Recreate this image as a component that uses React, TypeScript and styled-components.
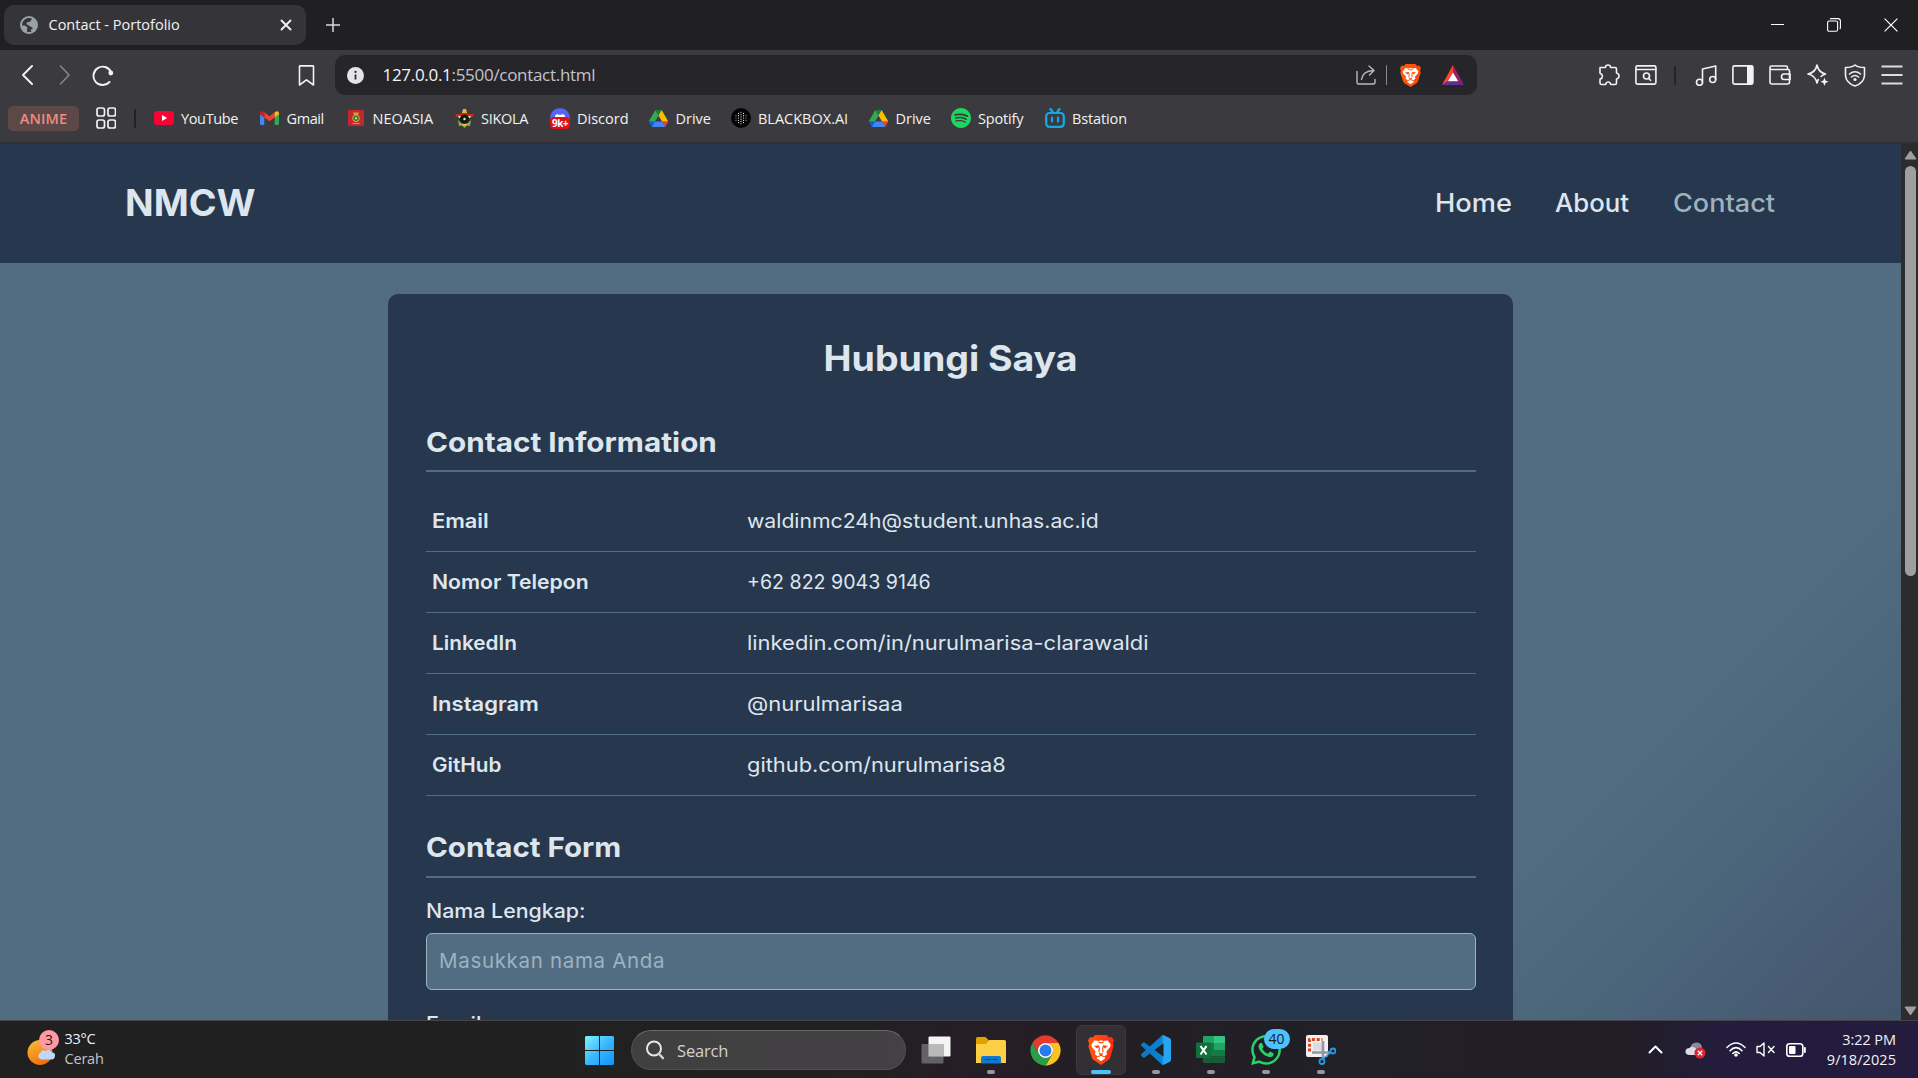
import React from "react";
import styled, { createGlobalStyle } from "styled-components";
import { SiSpotify, SiWhatsapp } from "react-icons/si";

const ui = `"Open Sans", "Noto Sans", sans-serif`;
const web = `Inter, "Open Sans", sans-serif`;

const Global = createGlobalStyle`
  * { box-sizing: border-box; }
  html, body { margin: 0; overflow: hidden; background: #202023; }
  svg { display: block; flex: none; }
`;

const Screen = styled.div`
  width: 1918px;
  height: 1078px;
  display: flex;
  flex-direction: column;
  overflow: hidden;
  font-family: ${ui};
  color: #f2f2f4;
`;

const T = styled.span<{ $ls?: number }>`
  letter-spacing: ${(p) => p.$ls ?? 0}px;
  white-space: nowrap;
`;

const Wide = styled.span<{ $x: number; $center?: boolean }>`
  display: inline-block;
  white-space: nowrap;
  transform: scaleX(${(p) => p.$x});
  transform-origin: ${(p) => (p.$center ? "center" : "left")};
`;

/* ---------- browser chrome ---------- */
const TabStrip = styled.header`
  height: 50px;
  flex: none;
  display: flex;
  justify-content: space-between;
  padding: 5px 20px 0 4px;
  background: #202023;
`;
const Tabs = styled.div`
  display: flex;
  gap: 20px;
  align-items: flex-start;
`;
const Tab = styled.div`
  width: 302px;
  height: 40px;
  border-radius: 10px;
  background: #353539;
  display: flex;
  align-items: center;
  padding: 0 14px 0 16px;
  font-size: 14.5px;
  ${T} { margin-left: 10.5px; flex: 1; padding-bottom: 2px; }
`;
const NewTab = styled.div`
  height: 40px;
  display: flex;
  align-items: center;
`;
const WindowButtons = styled.div`
  height: 39px;
  display: flex;
  align-items: center;
  gap: 43px;
`;
const Toolbar = styled.div`
  height: 50px;
  flex: none;
  display: flex;
  align-items: center;
  padding: 0 15px 0 20px;
  background: #3b3b3f;
`;
const NavButtons = styled.div`
  display: flex;
  align-items: center;
  gap: 19px;
  width: 278px;
`;
const BookmarkSlot = styled.div`
  width: 37px;
`;
const AddressBar = styled.div`
  width: 1142px;
  height: 40px;
  border-radius: 10px;
  background: #26262a;
  display: flex;
  align-items: center;
  padding: 0 13px 0 11.5px;
  gap: 19px;
`;
const Url = styled.div`
  flex: 1;
  font-size: 17px;
  color: #c3c3ca;
  padding-bottom: 1px;
  b { font-weight: 400; color: #f4f4f7; }
`;
const AddressActions = styled.div`
  display: flex;
  align-items: center;
`;
const BatSlot = styled.div`
  margin-left: 21px;
`;
const Rule = styled.i<{ $h: number; $w: number; $c: string; $m: string }>`
  width: ${(p) => p.$w}px;
  height: ${(p) => p.$h}px;
  margin: ${(p) => p.$m};
  background: ${(p) => p.$c};
  flex: none;
  border-radius: 1px;
`;
const Extensions = styled.div`
  display: flex;
  align-items: center;
  gap: 15.2px;
  margin-left: auto;
`;
const Bookmarks = styled.nav`
  height: 44px;
  flex: none;
  display: flex;
  align-items: center;
  padding: 0 0 6px 8px;
  background: #3b3b3f;
  border-bottom: 2px solid #2f2f33;
`;
const Chip = styled.div`
  width: 71px;
  height: 25px;
  border-radius: 5px;
  background: #5b4847;
  color: #f28b82;
  font-size: 14.5px;
  font-weight: 600;
  display: flex;
  align-items: center;
  justify-content: center;
  margin-right: 17px;
`;
const Bookmark = styled.div<{ $w: number }>`
  width: ${(p) => p.$w}px;
  display: flex;
  align-items: center;
  gap: 7px;
  font-size: 14.5px;
`;
const IconBox = styled.span`
  position: relative;
  width: 20px;
  height: 22px;
  display: grid;
  place-items: center;
  flex: none;
`;
const UnreadCount = styled.span`
  position: absolute;
  left: 0;
  bottom: 0;
  width: 20px;
  height: 12px;
  border-radius: 4px;
  background: #dd1010;
  color: #fff;
  font: 700 10px/12px ${ui};
  letter-spacing: -0.5px;
  text-align: center;
`;

/* ---------- page ---------- */
const Viewport = styled.div`
  height: 876px;
  flex: none;
  display: flex;
`;
const Page = styled.div`
  width: 1901px;
  overflow: hidden;
  font-family: ${web};
  color: #dde6ed;
  background: linear-gradient(135deg, #526d82 80%, #4a657a 89%, #4b6179 90.5%, #42566d 100%);
`;
const SiteHeader = styled.div`
  height: 119px;
  background: #27374d;
  display: flex;
  align-items: center;
  justify-content: space-between;
  padding: 0 124px 2px 125px;
`;
const Brand = styled.div`
  font-size: 37.5px;
  font-weight: 700;
`;
const SiteNav = styled.nav`
  display: flex;
  font-size: 25px;
  font-weight: 500;
`;
const NavLink = styled.a<{ $active?: boolean; $w: number }>`
  width: ${(p) => p.$w}px;
  color: ${(p) => (p.$active ? "#9db2bf" : "#dde6ed")};
`;
const Card = styled.main`
  width: 1125px;
  height: 1400px;
  margin: 31px auto 0;
  border-radius: 10px;
  background: #27374d;
  padding: 38px 37.5px;
`;
const Title = styled.h1`
  margin: 0 0 37px;
  font-size: 35px;
  line-height: 52px;
  font-weight: 700;
  text-align: center;
`;
const SectionTitle = styled.h2<{ $gap: number }>`
  margin: 0;
  font-size: 27.5px;
  line-height: 43px;
  font-weight: 700;
  padding-bottom: ${(p) => p.$gap}px;
  border-bottom: 2px solid #526d82;
`;
const InfoList = styled.div`
  margin: 19px 0 30px;
`;
const InfoRow = styled.div`
  height: 61px;
  display: grid;
  grid-template-columns: 315px 1fr;
  align-items: center;
  padding-left: 6px;
  border-bottom: 1px solid #526d82;
  font-size: 20px;
`;
const InfoLabel = styled.span`
  font-weight: 600;
`;
const Form = styled.form`
  padding-top: 18px;
  font-size: 20px;
`;
const Label = styled.label`
  display: block;
  font-weight: 500;
  line-height: 30px;
`;
const Input = styled.input`
  display: block;
  width: 100%;
  height: 57px;
  margin: 7px 0 19px;
  padding: 0 12.5px 2px;
  border: 1px solid #9db2bf;
  border-radius: 6px;
  background: #526d82;
  font: 400 20.5px ${web};
  letter-spacing: 0.68px;
  &::placeholder { color: #9db2bf; opacity: 1; }
`;
const Scrollbar = styled.div`
  width: 17px;
  background: #2c2c2c;
  display: flex;
  flex-direction: column;
  align-items: center;
  padding: 6px 0 4px 1px;
`;
const Thumb = styled.div`
  width: 11px;
  height: 410px;
  margin: 6px 0 auto;
  border-radius: 6px;
  background: #9f9f9f;
`;

/* ---------- taskbar ---------- */
const Taskbar = styled.footer`
  height: 58px;
  flex: none;
  display: flex;
  justify-content: space-between;
  border-top: 1px solid #454347;
  background: linear-gradient(90deg, #202020 0, #212121 45%, #251e25 50%, #221f24 60%, #211f28 72%, #211e28 85%, #231c3c 90%, #241b3e 100%);
`;
const Weather = styled.div`
  width: 585px;
  padding: 0 0 1px 27px;
  display: flex;
  align-items: center;
  gap: 7.5px;
`;
const WeatherIcon = styled.div`
  position: relative;
  width: 30px;
  height: 36px;
`;
const Badge = styled.span<{ $w: number; $bg: string; $x: number; $y: number }>`
  position: absolute;
  left: ${(p) => p.$x}px;
  top: ${(p) => p.$y}px;
  width: ${(p) => p.$w}px;
  height: 20px;
  border-radius: 10px;
  background: ${(p) => p.$bg};
  color: #1b1b1b;
  font: 400 14px/20px ${ui};
  text-align: center;
`;
const TwoLines = styled.div<{ $right?: boolean; $dim?: boolean }>`
  display: flex;
  flex-direction: column;
  align-items: ${(p) => (p.$right ? "flex-end" : "flex-start")};
  font-size: 14.5px;
  line-height: 20px;
  ${T}:last-child { color: ${(p) => (p.$dim ? "#c4c4c4" : "inherit")}; }
`;
const Apps = styled.div`
  flex: 1;
  display: flex;
  align-items: center;
  padding-top: 1px;
`;
const Search = styled.div`
  width: 275px;
  height: 40px;
  margin: 0 2px 0 17px;
  border-radius: 20px;
  background: linear-gradient(90deg, #404040, #444044);
  border: 1px solid #514f51;
  border-top-color: #6a686a;
  display: flex;
  align-items: center;
  gap: 12px;
  padding: 0 14px 0 13px;
  font-size: 16.5px;
  color: #d2d2d2;
`;
const TaskSlot = styled.div`
  width: 55px;
  flex: none;
  height: 57px;
  display: grid;
  place-items: center;
`;
const TaskButton = styled.div<{ $active?: boolean }>`
  position: relative;
  width: 50px;
  height: 50px;
  border-radius: 6px;
  display: grid;
  place-items: center;
  background: ${(p) => (p.$active ? "#323034" : "transparent")};
  border: 1px solid ${(p) => (p.$active ? "#3b393d" : "transparent")};
`;
const Running = styled.i<{ $active?: boolean }>`
  position: absolute;
  bottom: 0;
  left: 50%;
  transform: translateX(-50%);
  width: ${(p) => (p.$active ? 20 : 8)}px;
  height: 4px;
  border-radius: 2px;
  background: ${(p) => (p.$active ? "#4cc2ff" : "#99979b")};
`;
const Tray = styled.div`
  display: flex;
  align-items: center;
  padding-right: 22px;
`;
const TrayItem = styled.div<{ $gap: number }>`
  margin-right: ${(p) => p.$gap}px;
`;

/* ---------- drawings ---------- */
const line = { fill: "none", stroke: "#f2f2f4", strokeWidth: 1.6, strokeLinecap: "round" as const, strokeLinejoin: "round" as const };

const Globe = () => (
  <svg width="18" height="18" viewBox="0 0 18 18">
    <circle cx="9" cy="9" r="9" fill="#9aa0a6" />
    <path d="M7.5 2.2 C4 3 2 6 2.1 9.4 L5 9.6 L7.5 11.5 L6.8 15.6 C8.2 16.3 10 16.2 11.5 15.4 L10.6 13.8 L13.2 12.2 L9.5 9.9 L6.4 8 L7 6.2 L9.6 6 L11.5 3.8 L12 2.7 C10.5 2 9 1.9 7.5 2.2Z" fill="#353539" />
  </svg>
);
const Drive = () => (
  <svg width="19" height="17" viewBox="0 0 87.3 78">
    <path d="m6.600 66.850 3.850 6.650c.8 1.400 1.950 2.500 3.300 3.300l13.750-23.800h-27.500c0 1.550.4 3.100 1.200 4.500z" fill="#0066da" />
    <path d="m43.650 25-13.750-23.800c-1.350.8-2.500 1.900-3.300 3.300l-25.400 44a9.060 9.060 0 0 0 -1.200 4.500h27.500z" fill="#34a853" />
    <path d="m73.550 76.800c1.350-.8 2.500-1.900 3.300-3.300l1.600-2.750 7.650-13.250c.8-1.400 1.200-2.950 1.200-4.500h-27.500l5.850 11.500z" fill="#ea4335" />
    <path d="m43.650 25 13.750-23.800c-1.350-.8-2.900-1.200-4.500-1.200h-18.500c-1.600 0-3.150.45-4.500 1.200z" fill="#188038" />
    <path d="m59.800 53h-32.300l-13.750 23.800c1.350.8 2.900 1.200 4.500 1.200h50.800c1.600 0 3.150-.45 4.500-1.200z" fill="#4285f4" />
    <path d="m73.400 26.500-12.700-22c-.8-1.400-1.950-2.500-3.300-3.300l-13.750 23.800 16.150 28h27.450c0-1.550-.4-3.100-1.200-4.500z" fill="#fbbc04" />
  </svg>
);
const YouTube = () => (
  <svg width="20" height="14" viewBox="0 0 20 14">
    <rect width="20" height="14" rx="3.4" fill="#ff0033" />
    <path d="M8 4 L13.2 7 L8 10Z" fill="#fff" />
  </svg>
);
const Gmail = () => (
  <svg width="19" height="14" viewBox="0 0 19 14">
    <path d="M0 3 L4.3 6.2 V14 H1.3 Q0 14 0 12.7Z" fill="#4285f4" />
    <path d="M19 3 L14.7 6.2 V14 H17.7 Q19 14 19 12.7Z" fill="#34a853" />
    <path d="M4.3 1.3 L9.5 5.2 L14.7 1.3 V6.4 L9.5 10.3 L4.3 6.4Z" fill="#ea4335" />
    <path d="M0 2.2 C0 0 2.2 -.5 4.3 1.3 V6.4 L0 3.2Z" fill="#c5221f" />
    <path d="M19 2.2 C19 0 16.8 -.5 14.7 1.3 V6.4 L19 3.2Z" fill="#fbbc04" />
  </svg>
);
const Neoasia = () => (
  <svg width="16" height="16" viewBox="0 0 16 16">
    <rect width="16" height="16" rx="1" fill="#c3272b" />
    <path d="M5 2.5 H11 L10 5 H6Z" fill="#d99a2b" />
    <circle cx="8" cy="8.3" r="3.6" fill="#d9b13a" />
    <circle cx="8" cy="8.3" r="2.7" fill="#2a7b3a" />
    <circle cx="8" cy="8.3" r="1.1" fill="#e9dfa0" />
    <path d="M4.5 13.5 H11.5" stroke="#e58f7a" strokeWidth="1" />
  </svg>
);
const Sikola = () => (
  <svg width="19" height="19" viewBox="0 0 19 19">
    <path d="M0 5 L6 5 L7.5 3 L11.5 3 L13 5 L19 5 L17.5 8 L13 8 H6 L1.5 8Z" fill="#c62a22" />
    <path d="M3 7 H16 L15 9 H4Z" fill="#e8d9b0" />
    <path d="M8 0 H11 L12 4 H7Z" fill="#e6b83a" />
    <path d="M3 11 Q9.5 19 16 11 L15 17 L12 16.5 L9.5 19 L7 16.5 L4 17Z" fill="#8fae4a" />
    <circle cx="9.5" cy="10" r="4.6" fill="#111b12" />
    <circle cx="9.5" cy="10" r="1.2" fill="#e8e8d8" />
    <path d="M7 15 H12 V16.5 H7Z" fill="#e6c545" />
  </svg>
);
const Discord = () => (
  <svg width="20" height="21" viewBox="0 0 20 21">
    <circle cx="10" cy="10" r="10" fill="#5865f2" />
    <path d="M4.5 10 Q5 6.5 7.5 6 L8.5 6.7 H11.5 L12.5 6 Q15 6.5 15.5 10Z" fill="#fff" />
  </svg>
);
const columns = [3, 5, 6, 5, 3];
const Blackbox = () => (
  <svg width="20" height="20" viewBox="0 0 20 20">
    <circle cx="10" cy="10" r="10" fill="#050505" />
    {columns.map((n, i) =>
      Array.from({ length: n }, (_, j) => (
        <circle key={`${i}-${j}`} cx={5 + i * 2.5} cy={10 + (j - (n - 1) / 2) * 2.3} r={0.62} fill={i % 4 === 0 ? "#9f9f9f" : "#efefef"} />
      ))
    )}
  </svg>
);
const Bstation = () => (
  <svg width="20" height="20" viewBox="0 0 20 20">
    <rect x="1.2" y="5" width="17.6" height="13.8" rx="3.2" fill="none" stroke="#13a8e8" strokeWidth="2.2" />
    <path d="M5.5 1 L8 4.500 M14.500 1 L12 4.500 M7 9.500 V13.500 M13 9.500 V13.500" stroke="#13a8e8" strokeWidth="2.2" strokeLinecap="round" />
  </svg>
);
const BraveLogo = ({ w, h, end }: { w: number; h: number; end: string }) => (
  <svg width={w} height={h} viewBox="0 0 24 28" preserveAspectRatio="none">
    <defs>
      <linearGradient id={`brave${w}`} x1="0" x2="1">
        <stop offset="0" stopColor="#ff5a0a" />
        <stop offset="1" stopColor={end} />
      </linearGradient>
    </defs>
    <path fill={`url(#brave${w})`} d="M6.500 0 H17.500 L19.500 2.400 L21.800 1.900 L24 5 L23 8 L23.600 10.500 L20.500 21 Q20 22.500 18.800 23.400 L12 28 L5.200 23.400 Q4 22.500 3.500 21 L.4 10.500 L1 8 L0 5 L2.200 1.900 L4.500 2.400Z" />
    <path fill="#fff" d="M6 4.800 L9.500 5.500 L12 5 L14.500 5.500 L18 4.800 L21 9 L20.300 11.500 L17 15.500 L17.600 18 L14.800 20 L16 21.600 L12 24.600 L8 21.600 L9.200 20 L6.400 18 L7 15.500 L3.700 11.500 L3 9Z" />
    <path fill="#fb4a05" d="M5.600 10.200 L10 9.600 L10.600 11.200 L8.500 12.600Z M18.400 10.200 L14 9.600 L13.400 11.200 L15.500 12.600Z M10 16 L12 17.600 L14 16 L13.400 18.400 L12 19.400 L10.600 18.400Z" />
    <path fill="none" stroke="#fb4a05" strokeWidth="1" d="M10.600 11.500 L10 16 M13.400 11.500 L14 16 M9 20.200 L12 19 L15 20.200 M9.500 6.500 L12 7.300 L14.500 6.500" />
  </svg>
);
const BatLogo = () => (
  <svg width="22" height="20" viewBox="0 0 22 20">
    <path d="M11 0 L0 20 L6 16.2 L11 7.4Z" fill="#ff4724" />
    <path d="M11 0 L22 20 L16 16.2 L11 7.4Z" fill="#9e1f63" />
    <path d="M0 20 H22 L16 16.2 H6Z" fill="#662d91" />
    <path d="M11 7.4 L16.2 16.3 H5.8Z" fill="#fff" />
  </svg>
);

const bookmarks: { name: string; w: number; ls: number; icon: React.ReactNode }[] = [
  { name: "YouTube", w: 105.5, ls: -0.36, icon: <YouTube /> },
  { name: "Gmail", w: 86, ls: -0.39, icon: <Gmail /> },
  { name: "NEOASIA", w: 108.5, ls: 0, icon: <Neoasia /> },
  { name: "SIKOLA", w: 96, ls: -0.28, icon: <Sikola /> },
  { name: "Discord", w: 98.5, ls: 0, icon: <><Discord /><UnreadCount>9k+</UnreadCount></> },
  { name: "Drive", w: 82.5, ls: 0, icon: <Drive /> },
  { name: "BLACKBOX.AI", w: 137.5, ls: 0, icon: <Blackbox /> },
  { name: "Drive", w: 82.5, ls: 0, icon: <Drive /> },
  { name: "Spotify", w: 94, ls: -0.16, icon: <SiSpotify size={20} color="#1ed760" /> },
  { name: "Bstation", w: 100, ls: -0.12, icon: <Bstation /> },
];

const contacts: { label: string; lx: number; value: string; vx: number }[] = [
  { label: "Email", lx: 1.09, value: "waldinmc24h@student.unhas.ac.id", vx: 1.06 },
  { label: "Nomor Telepon", lx: 1.059, value: "+62 822 9043 9146", vx: 0.979 },
  { label: "LinkedIn", lx: 1.04, value: "linkedin.com/in/nurulmarisa-clarawaldi", vx: 1.096 },
  { label: "Instagram", lx: 1.1, value: "@nurulmarisaa", vx: 1.1 },
  { label: "GitHub", lx: 1.038, value: "github.com/nurulmarisa8", vx: 1.092 },
];

const TaskApp = ({ active, running, children }: { active?: boolean; running?: boolean; children: React.ReactNode }) => (
  <TaskSlot>
    <TaskButton $active={active}>
      {children}
      {running && <Running $active={active} />}
    </TaskButton>
  </TaskSlot>
);

function BrowserTabs() {
  return (
    <TabStrip>
      <Tabs>
        <Tab>
          <Globe />
          <T>Contact - Portofolio</T>
          <svg width="12" height="12" viewBox="0 0 12 12"><path d="M1.5 1.5 L10.5 10.5 M10.5 1.5 L1.5 10.5" {...line} strokeWidth={1.9} /></svg>
        </Tab>
        <NewTab>
          <svg width="14" height="14" viewBox="0 0 14 14"><path d="M7 0 V14 M0 7 H14" stroke="#d8d8da" strokeWidth="1.5" /></svg>
        </NewTab>
      </Tabs>
      <WindowButtons>
        <svg width="13" height="14" viewBox="0 0 13 14"><path d="M0 6.5 H13" stroke="#fff" /></svg>
        <svg width="14" height="14" viewBox="0 0 14 14">
          <rect x=".6" y="3" width="10" height="10.3" rx="1.5" fill="none" stroke="#fff" strokeWidth="1.1" />
          <path d="M3 1.2 Q3.5 .6 4.5 .6 H11 Q13.4 .6 13.4 3 V9.5 Q13.4 10.6 12.7 11" fill="none" stroke="#fff" strokeWidth="1.1" />
        </svg>
        <svg width="14" height="14" viewBox="0 0 14 14"><path d="M.6 .6 L13.4 13.4 M13.4 .6 L.6 13.4" stroke="#fff" strokeWidth="1.2" /></svg>
      </WindowButtons>
    </TabStrip>
  );
}

function BrowserToolbar() {
  return (
    <Toolbar>
      <NavButtons>
        <svg width="17" height="20" viewBox="0 0 17 20"><path d="M12 1 L3 10 L12 19" {...line} strokeWidth={1.9} /></svg>
        <svg width="17" height="20" viewBox="0 0 17 20"><path d="M4.5 1 L13 10 L4.5 19" {...line} stroke="#858589" /></svg>
        <svg width="22" height="21" viewBox="0 0 22 21">
          <path d="M17.5 17 A9.2 9.2 0 1 1 19 7" {...line} strokeWidth={1.9} />
          <circle cx="18.8" cy="8" r="2.4" fill="#f2f2f4" />
        </svg>
      </NavButtons>
      <BookmarkSlot>
        <svg width="17" height="21" viewBox="0 0 17 21"><path d="M1.5 1.5 Q1.5 .9 2.1 .9 H14.9 Q15.5 .9 15.5 1.5 V20 L8.5 14.8 L1.5 20Z" {...line} /></svg>
      </BookmarkSlot>
      <AddressBar>
        <svg width="17" height="17" viewBox="0 0 17 17">
          <circle cx="8.5" cy="8.5" r="8.5" fill="#e4e4ea" />
          <path d="M8.5 7.5 V12.5" stroke="#26262a" strokeWidth="1.7" />
          <circle cx="8.5" cy="4.9" r="1.1" fill="#26262a" />
        </svg>
        <Url><T $ls={-0.3}><b>127.0.0.1</b>:5500/contact.html</T></Url>
        <AddressActions>
          <svg width="20" height="20" viewBox="0 0 20 20">
            <path d="M1 6.5 V17.5 Q1 19 2.5 19 H17.5 Q19 19 19 17.5 V14.5" {...line} stroke="#b9b9bf" strokeWidth={1.4} />
            <path d="M5.5 14.5 Q6.5 6 17.5 5.5 M13 1 L18 5.5 L13.5 10" {...line} stroke="#b9b9bf" strokeWidth={1.4} />
          </svg>
          <Rule $w={1.5} $h={20} $c="#8a8a90" $m="0 13px 0 10px" />
          <BraveLogo w={21} h={23} end="#fb4a05" />
          <BatSlot><BatLogo /></BatSlot>
        </AddressActions>
      </AddressBar>
      <Extensions>
        <svg width="22" height="22" viewBox="0 0 22 22">
          <path d="M2 3.5 H7.2 Q7.6 3.5 7.6 3 Q7.6 1 10 1 Q12.4 1 12.4 3 Q12.4 3.5 12.9 3.5 H17 Q18.5 3.5 18.5 5 V8.7 Q18.5 9.2 19 9.3 Q21 9.7 21 12 Q21 14.3 19 14.7 Q18.5 14.8 18.5 15.3 V19 Q18.5 20.5 17 20.5 H13 Q12.6 20.5 12.5 20 Q12.2 18 10.2 18 Q8.2 18 7.9 20 Q7.8 20.5 7.4 20.5 H3.5 Q2 20.5 2 19 V15.5 Q2 15 2.5 14.9 Q4.4 14.5 4.4 12.3 Q4.4 10 2.5 9.6 Q2 9.5 2 9 V4.5 Q2 3.5 2.8 3.5" {...line} />
        </svg>
        <svg width="22" height="20" viewBox="0 0 22 20">
          <rect x=".9" y=".9" width="20" height="18.2" rx="1.5" {...line} />
          <path d="M1 4.5 H21" {...line} />
          <circle cx="11.5" cy="11" r="3" {...line} /><path d="M13.5 13.2 L15.5 15.3" {...line} />
        </svg>
        <Rule $w={2} $h={19} $c="#252528" $m="0 3.5px 0 2.5px" />
        <svg width="22" height="22" viewBox="0 0 22 22">
          <circle cx="4.5" cy="18.3" r="3" {...line} /><circle cx="17.7" cy="15.5" r="3" {...line} />
          <path d="M7.5 18 V5 L20.7 2 V15.5" {...line} />
        </svg>
        <svg width="22" height="20" viewBox="0 0 22 20">
          <rect x=".9" y=".9" width="20" height="18.2" rx="1.5" {...line} /><path d="M15 .9 H20.9 V19.1 H15Z" fill="#f2f2f4" />
        </svg>
        <svg width="22" height="20" viewBox="0 0 22 20">
          <path d="M18.5 4 V2.5 Q18.5 1 17 1 H2.5 Q1 1 1 2.5 V17 Q1 19 3 19 H18.5 Q20.5 19 20.5 17 V6 Q20.5 4.5 19 4.5 H2.5 Q1 4.5 1 2.9" {...line} />
          <path d="M21 9 H15 Q12.5 9 12.5 11.7 Q12.5 14.5 15 14.5 H21Z" {...line} />
        </svg>
        <svg width="22" height="22" viewBox="0 0 22 22">
          <path d="M14 12.5 Q15.500 11 18.500 10 Q11.500 8.500 10 1 Q8.500 8.500 1 10 Q8.500 11.500 10 19 Q10.500 17 11.300 15.500" {...line} />
          <path d="M17.5 13.5 L18.5 16.5 L21.5 17.8 L18.5 19 L17.5 22 L16.3 19 L13.5 17.8 L16.3 16.5Z" fill="#f2f2f4" />
        </svg>
        <svg width="22" height="23" viewBox="0 0 22 23">
          <path d="M11 1 Q14 3.5 20.5 3.5 V11.5 Q20 19 11 22 Q2 19 1.5 11.5 V3.5 Q8 3.5 11 1Z" {...line} />
          <path d="M5.5 10 Q11 5.5 16.5 10 M7.5 13 Q11 10 14.5 13" {...line} /><circle cx="11" cy="15.5" r="1.6" fill="#f2f2f4" />
        </svg>
        <svg width="22" height="20" viewBox="0 0 22 20"><path d="M.5 1.5 H21.5 M.5 10 H21.5 M.5 18.5 H21.5" stroke="#dededf" strokeWidth="1.8" /></svg>
      </Extensions>
    </Toolbar>
  );
}

function BookmarkBar() {
  return (
    <Bookmarks>
      <Chip><T $ls={0.15}>ANIME</T></Chip>
      <svg width="20" height="22" viewBox="0 0 20 22">
        {[[1, 1], [12, 1], [1, 13], [12, 13]].map(([x, y]) => <rect key={`${x}${y}`} x={x} y={y} width="7.5" height="8" rx="2" {...line} strokeWidth={1.7} />)}
      </svg>
      <Rule $w={2} $h={19} $c="#222225" $m="0 18px 0 18px" />
      {bookmarks.map((b, i) => (
        <Bookmark key={i} $w={b.w}><IconBox>{b.icon}</IconBox><T $ls={b.ls}>{b.name}</T></Bookmark>
      ))}
    </Bookmarks>
  );
}

function ContactPage() {
  return (
    <Page>
      <SiteHeader>
        <Brand><Wide $x={1.003}>NMCW</Wide></Brand>
        <SiteNav>
          <NavLink $w={120.3}><Wide $x={1.09}>Home</Wide></NavLink>
          <NavLink $w={118.2}><Wide $x={1.03}>About</Wide></NavLink>
          <NavLink $w={104} $active><Wide $x={1.083}>Contact</Wide></NavLink>
        </SiteNav>
      </SiteHeader>
      <Card>
        <Title><Wide $x={1.071} $center>Hubungi Saya</Wide></Title>
        <SectionTitle $gap={6}><Wide $x={1.08}>Contact Information</Wide></SectionTitle>
        <InfoList>
          {contacts.map((c) => (
            <InfoRow key={c.label}>
              <InfoLabel><Wide $x={c.lx}>{c.label}</Wide></InfoLabel>
              <span><Wide $x={c.vx}>{c.value}</Wide></span>
            </InfoRow>
          ))}
        </InfoList>
        <SectionTitle $gap={7}><Wide $x={1.073}>Contact Form</Wide></SectionTitle>
        <Form>
          <Label><Wide $x={1.068}>Nama Lengkap:</Wide></Label>
          <Input placeholder="Masukkan nama Anda" />
          <Label><Wide $x={1.08}>Email:</Wide></Label>
        </Form>
      </Card>
    </Page>
  );
}

function WindowsTaskbar() {
  return (
    <Taskbar>
      <Weather>
        <WeatherIcon>
          <svg width="30" height="36" viewBox="0 0 30 36">
            <defs><linearGradient id="sun" x1="0" y1="0" x2=".5" y2="1"><stop offset="0" stopColor="#f9c13c" /><stop offset="1" stopColor="#f0700f" /></linearGradient></defs>
            <circle cx="13" cy="21.5" r="12.5" fill="url(#sun)" />
            <path d="M14 28.5 A3.5 3.5 0 0 1 13.5 21.8 Q15 18 19 20 Q22 17 25 21.5 Q28.5 21.5 28 25 Q27.5 28.5 24.5 28.5Z" fill="#bcd8fb" />
          </svg>
          <Badge $w={20} $bg="#ff99a4" $x={12} $y={-1}>3</Badge>
        </WeatherIcon>
        <TwoLines $dim><T $ls={-0.27}>33°C</T><T $ls={-0.2}>Cerah</T></TwoLines>
      </Weather>
      <Apps>
        <svg width="29" height="29" viewBox="0 0 29 29">
          <defs><linearGradient id="win" x1="0" y1="0" x2="1" y2="1"><stop offset="0" stopColor="#7cf3ff" /><stop offset=".5" stopColor="#3bb8fd" /><stop offset="1" stopColor="#0b94fd" /></linearGradient></defs>
          <path d="M1 0 H14 V14 H0 V1Z M15 0 H28 L29 1 V14 H15Z M0 15 H14 V29 H1 L0 28Z M15 15 H29 V28 L28 29 H15Z" fill="url(#win)" />
        </svg>
        <Search>
          <svg width="20" height="20" viewBox="0 0 20 20"><circle cx="9" cy="8.5" r="7" {...line} stroke="#e6e6ea" strokeWidth={2} /><path d="M14 14 L18 18.2" {...line} stroke="#d0d0d4" strokeWidth={2.4} /></svg>
          <T $ls={-0.17}>Search</T>
        </Search>
        <TaskApp>
          <svg width="30" height="28" viewBox="0 0 30 28">
            <rect x="7.5" y=".5" width="22" height="20" rx="1" fill="#f4f4f4" />
            <rect x=".5" y="8" width="22" height="19.5" rx="1" fill="#6f6f70" fillOpacity=".85" />
            <path d="M7.5 8 H22.5 V20.5 H7.5Z" fill="#b9b9b9" />
          </svg>
        </TaskApp>
        <TaskApp running>
          <svg width="30" height="28" viewBox="0 0 30 28">
            <path d="M0 2.5 Q0 1 1.5 1 H9.5 L12.5 4 V9 H0Z" fill="#e0a000" />
            <path d="M0 8 H10 L13 4 H28.5 Q30 4 30 5.5 V27 H0Z" fill="#fdcf45" />
            <path d="M5 27.5 V22 Q5 20 7 20 H23 Q25 20 25 22 V27.5Z" fill="#0f7bd0" />
            <path d="M8.5 23.5 H21.5" stroke="#0a4f8e" strokeWidth="1.2" />
          </svg>
        </TaskApp>
        <TaskApp>
          <svg width="31" height="31" viewBox="1.5 1.5 45 45">
            <path d="M24 13 H43.05 A22 22 0 0 0 4.95 13 L14.47 29.5 A11 11 0 0 1 24 13Z" fill="#e33b2e" />
            <path d="M43.05 13 A22 22 0 0 1 24 46 L33.53 29.5 A11 11 0 0 0 24 13Z" fill="#fcc31e" />
            <path d="M4.95 13 A22 22 0 0 0 24 46 L33.53 29.5 A11 11 0 0 1 14.47 29.5Z" fill="#2a9d47" />
            <circle cx="24" cy="24" r="11" fill="#fff" /><circle cx="24" cy="24" r="8.7" fill="#2a79ee" />
          </svg>
        </TaskApp>
        <TaskApp active running><BraveLogo w={26} h={30} end="#ff2a14" /></TaskApp>
        <TaskApp running>
          <svg width="30" height="30" viewBox="0 0 24 24">
            <defs><linearGradient id="code" x1="0" x2="1"><stop offset="0" stopColor="#0a78c4" /><stop offset=".68" stopColor="#0a82d2" /><stop offset=".76" stopColor="#27a5f2" /><stop offset="1" stopColor="#27a5f2" /></linearGradient></defs>
            <path fill="url(#code)" d="M23.150 2.587L18.210.21a1.494 1.494 0 0 0-1.705.29l-9.460 8.630-4.120-3.128a.999.999 0 0 0-1.276.057L.327 7.261A1 1 0 0 0 .326 8.740L3.899 12 .326 15.260a1 1 0 0 0 .001 1.479L1.650 17.940a.999.999 0 0 0 1.276.057l4.120-3.128 9.460 8.630a1.492 1.492 0 0 0 1.704.29l4.942-2.377A1.500 1.500 0 0 0 24 20.060V3.939a1.500 1.500 0 0 0-.85-1.352zm-5.146 14.861L10.826 12l7.178-5.448v10.896z" />
          </svg>
        </TaskApp>
        <TaskApp running>
          <svg width="30" height="28" viewBox="0 0 30 28">
            <path d="M7 1 Q7 0 8 0 H18 V7 H7Z" fill="#21a366" /><path d="M18 0 H28 Q29 0 29 1 V7 H18Z" fill="#33c481" />
            <path d="M7 7 H18 V20 H7Z" fill="#107c41" /><path d="M18 7 H29 V14 H18Z" fill="#21a366" /><path d="M18 14 H29 V20 H18Z" fill="#107c41" />
            <path d="M7 20 H29 V26 Q29 27 28 27 H8 Q7 27 7 26Z" fill="#185c37" />
            <rect x="0" y="6.5" width="15" height="15.5" rx="1.2" fill="#0f7139" />
            <path d="M4.5 10 L10.5 18.5 M10.5 10 L4.5 18.5" stroke="#fff" strokeWidth="2.1" />
          </svg>
        </TaskApp>
        <TaskApp running>
          <SiWhatsapp size={30} color="#25d366" />
          <Badge $w={26} $bg="#4cc2ff" $x={22} $y={3}>40</Badge>
        </TaskApp>
        <TaskApp running>
          <svg width="30" height="30" viewBox="0 0 30 30">
            <rect x="0" y="0" width="22" height="22" rx="2" fill="#f1f1f3" />
            <path d="M3.5 16.5 V4.5 H16.5" fill="none" stroke="#d8481d" strokeWidth="3" strokeDasharray="3 1.8" />
            <path d="M7 7.5 H16 V15.5 H7Z" fill="#dcdce0" />
            <path d="M17 6 V23 M6 17.5 H24" stroke="#8d98a3" strokeWidth="2.6" />
            <circle cx="16" cy="26.5" r="2.5" fill="none" stroke="#1f9be8" strokeWidth="1.8" />
            <circle cx="27" cy="16" r="2.5" fill="none" stroke="#1f9be8" strokeWidth="1.8" />
            <path d="M17 24 L24.5 17.5" stroke="#1f9be8" strokeWidth="1.6" />
          </svg>
        </TaskApp>
      </Apps>
      <Tray>
        <TrayItem $gap={22}><svg width="15" height="9" viewBox="0 0 15 9"><path d="M1.5 7.5 L7.5 1.5 L13.5 7.5" {...line} strokeWidth={2} stroke="#fff" /></svg></TrayItem>
        <TrayItem $gap={19.5}>
          <svg width="21" height="18" viewBox="0 0 21 18">
            <path d="M5 8 Q6 1 12 1.5 Q17 2 17 7 L17 10 H8Z" fill="#8c8a98" />
            <path d="M4 14 Q0 13.5 .5 10 Q1 7 4.5 7 Q7 4.5 11 7.5 L13 14Z" fill="#dddce4" />
            <circle cx="15" cy="12" r="5.6" fill="#d8252f" />
            <path d="M12.8 9.8 L17.2 14.2 M17.2 9.8 L12.8 14.2" stroke="#fff" strokeWidth="1.3" />
          </svg>
        </TrayItem>
        <TrayItem $gap={10}>
          <svg width="20" height="15" viewBox="0 0 20 15">
            <path d="M1 5.5 Q10 -3.5 19 5.5 M4 8.7 Q10 2.5 16 8.7 M6.8 11.5 Q10 8.3 13.2 11.5" {...line} stroke="#fff" /><circle cx="10" cy="13" r="1.8" fill="#fff" />
          </svg>
        </TrayItem>
        <TrayItem $gap={11}>
          <svg width="19" height="15" viewBox="0 0 19 15">
            <path d="M1 4.5 H4 L8 1 V14 L4 10.5 H1Z" {...line} stroke="#fff" strokeWidth={1.4} /><path d="M12.5 4.5 L18 10.5 M18 4.5 L12.5 10.5" {...line} stroke="#fff" strokeWidth={1.4} />
          </svg>
        </TrayItem>
        <TrayItem $gap={21}>
          <svg width="20" height="14" viewBox="0 0 20 14">
            <rect x=".8" y=".8" width="16" height="12.4" rx="2.8" {...line} stroke="#fff" /><rect x="3" y="3" width="6.5" height="8" rx="1" fill="#fff" /><path d="M18.8 5 V9" {...line} stroke="#fff" strokeWidth={2} />
          </svg>
        </TrayItem>
        <TwoLines $right><T $ls={-0.07}>3:22 PM</T><T $ls={0.06}>9/18/2025</T></TwoLines>
      </Tray>
    </Taskbar>
  );
}

export default function App() {
  return (
    <Screen>
      <Global />
      <BrowserTabs />
      <BrowserToolbar />
      <BookmarkBar />
      <Viewport>
        <ContactPage />
        <Scrollbar>
          <svg width="13" height="10" viewBox="0 0 13 10"><path d="M6.5 1 L12 9 H1Z" fill="#9f9f9f" stroke="#9f9f9f" strokeLinejoin="round" /></svg>
          <Thumb />
          <svg width="13" height="10" viewBox="0 0 13 10"><path d="M1 1 H12 L6.5 9Z" fill="#9f9f9f" stroke="#9f9f9f" strokeLinejoin="round" /></svg>
        </Scrollbar>
      </Viewport>
      <WindowsTaskbar />
    </Screen>
  );
}
